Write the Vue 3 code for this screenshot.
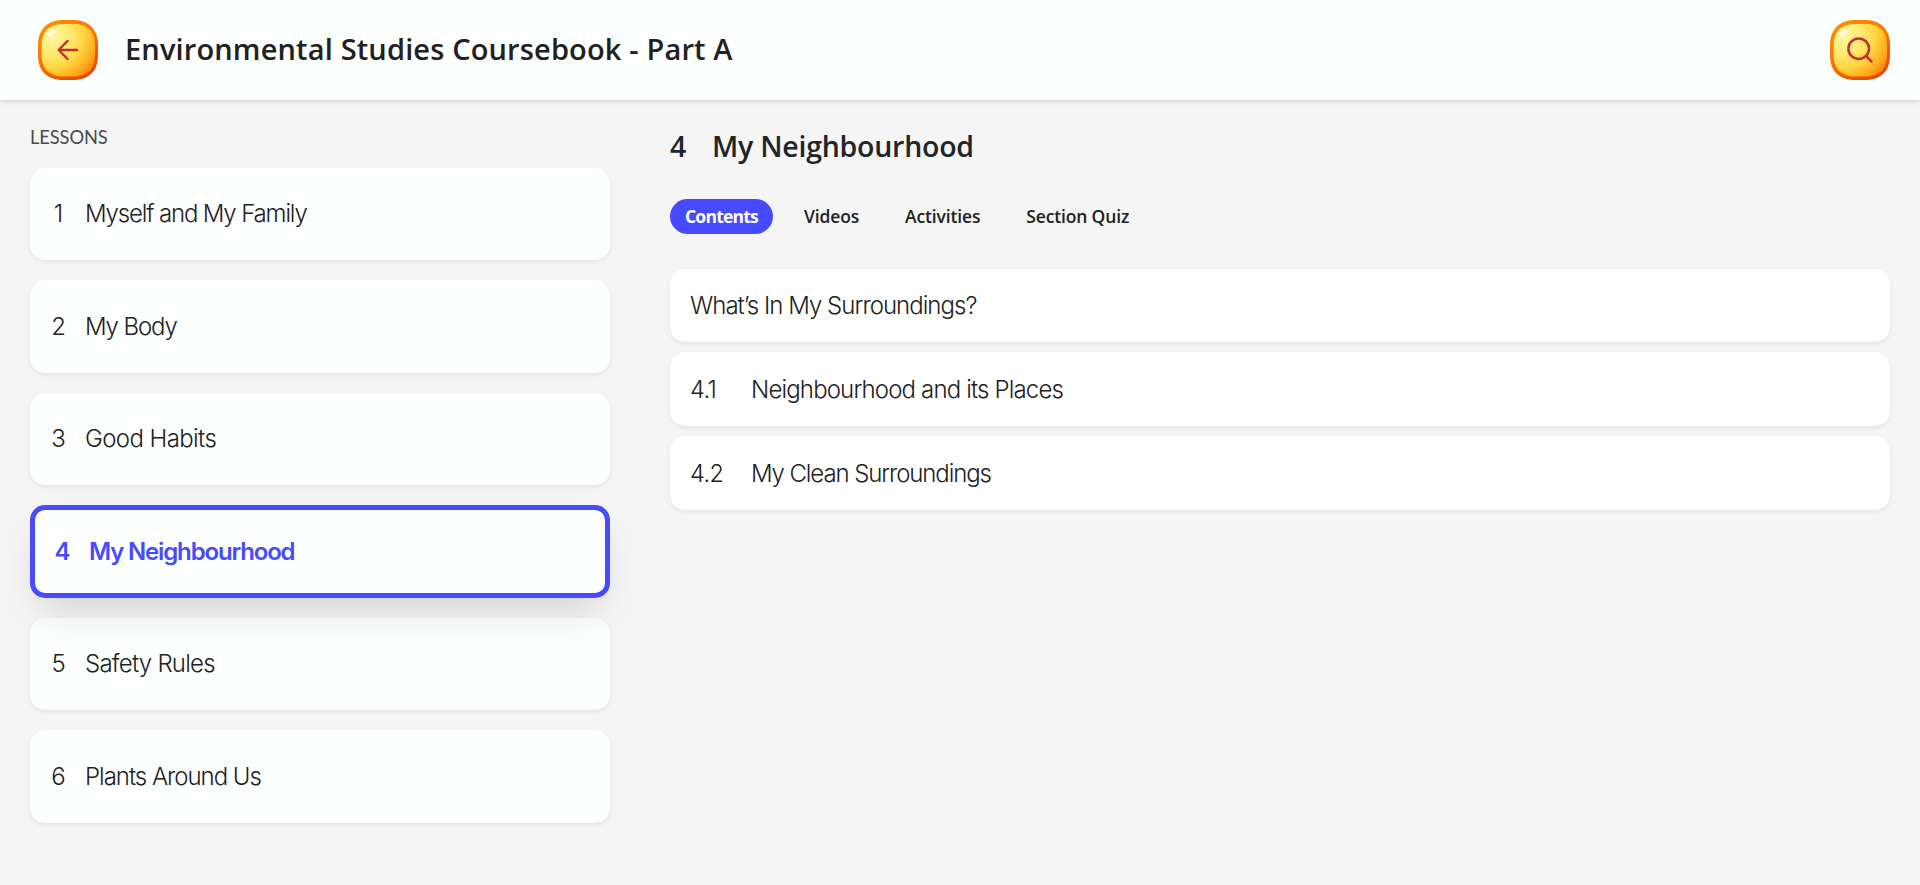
<script setup>
const lessons = [
  { no: '1', title: 'Myself and My Family', track: -1.15 },
  { no: '2', title: 'My Body', track: -1.1 },
  { no: '3', title: 'Good Habits', track: -0.6 },
  { no: '4', title: 'My Neighbourhood', track: -1.16, active: true },
  { no: '5', title: 'Safety Rules', track: -0.76 },
  { no: '6', title: 'Plants Around Us', track: -1.02 },
]
const tabs = [
  { label: 'Contents', active: true },
  { label: 'Videos' },
  { label: 'Activities' },
  { label: 'Section Quiz' },
]
const sections = [
  { title: 'What’s In My Surroundings?', track: -0.97 },
  { no: '4.1', title: 'Neighbourhood and its Places', track: -0.84 },
  { no: '4.2', title: 'My Clean Surroundings', track: -1.1 },
]
const icons = ['back', 'search']
</script>

<template>
  <div class="page">
    <svg class="defs" width="0" height="0" aria-hidden="true">
      <defs>
        <linearGradient id="rim" x1="0.2" y1="0" x2="0.8" y2="1">
          <stop offset="0" stop-color="#ff8c00" />
          <stop offset="0.5" stop-color="#f97200" />
          <stop offset="1" stop-color="#e54300" />
        </linearGradient>
        <radialGradient id="face" cx="0.2" cy="0.24" r="1.02">
          <stop offset="0" stop-color="#fff6a0" />
          <stop offset="0.32" stop-color="#ffea73" />
          <stop offset="0.58" stop-color="#ffd63f" />
          <stop offset="0.8" stop-color="#ffab1d" />
          <stop offset="1" stop-color="#ff7000" />
        </radialGradient>
      </defs>
    </svg>
    <header class="header">
      <button v-for="icon in icons" :key="icon" class="round" :class="icon" :aria-label="icon">
        <svg width="60" height="60" viewBox="0 0 60 60" fill="none">
          <path d="M25 0H35C51 0 60 10 60 25V35C60 51 51 60 35 60H25C9 60 0 51 0 35V25C0 10 9 0 25 0Z" fill="url(#rim)" />
          <path d="M26 4H35C50 4 57 11 57 26V34C57 49 50 56.500 35 56.500H25C11 56.500 3.500 49 3.500 34V26C3.500 11 11 4 26 4Z" fill="url(#face)" />
          <path d="M11.500 15Q12.500 12.500 15.500 11.500" stroke="#fffef0" stroke-width="3.600" stroke-linecap="round" />
          <g stroke="#c62f31" stroke-width="2.500" stroke-linecap="round" stroke-linejoin="round">
            <path v-if="icon === 'back'" d="M39 30H21M29.500 21L20.700 30L29.500 39" />
            <template v-else>
              <circle cx="28.700" cy="28.700" r="10.300" />
              <path d="M36.300 36.300L41.500 41.500" />
            </template>
          </g>
        </svg>
      </button>
      <h1 class="title">Environmental Studies Coursebook - Part A</h1>
    </header>
    <main class="body">
      <aside class="side">
        <div class="caption">LESSONS</div>
        <ul class="lessons">
          <li v-for="l in lessons" :key="l.no" class="lesson" :class="{ active: l.active }">
            <span class="num">{{ l.no }}</span>
            <span :style="{ letterSpacing: l.track + 'px' }">{{ l.title }}</span>
          </li>
        </ul>
      </aside>
      <section class="content">
        <h2 class="heading"><span class="hnum">4</span><span>My Neighbourhood</span></h2>
        <nav class="tabs">
          <a v-for="t in tabs" :key="t.label" class="tab" :class="{ active: t.active }">{{ t.label }}</a>
        </nav>
        <ul class="sections">
          <li v-for="s in sections" :key="s.title" class="section">
            <span v-if="s.no" class="snum">{{ s.no }}</span>
            <span :style="{ letterSpacing: s.track + 'px' }">{{ s.title }}</span>
          </li>
        </ul>
      </section>
    </main>
  </div>
</template>

<style>
body { background: #f5f5f5; }
</style>

<style scoped>
.page {
  height: 885px;
  overflow: hidden;
  background: #f5f5f5;
  color: #212121;
  font-family: Inter, "Liberation Sans", sans-serif;
  display: flex;
  flex-direction: column;
}
.page * { box-sizing: border-box; }
.defs { position: absolute; }
h1, h2, ul { margin: 0; padding: 0; list-style: none; }
.header {
  flex: none;
  height: 100px;
  padding: 0 30px 0 38px;
  display: flex;
  align-items: center;
  background: #fdfefe;
  box-shadow: 0 1px 5px rgba(0, 0, 0, 0.18);
}
.round {
  width: 60px;
  height: 60px;
  padding: 0;
  border: 0;
  background: none;
}
.round svg { display: block; }
.round.search { order: 3; }
.title {
  flex: 1;
  margin-left: 27px;
  padding-bottom: 2px;
  font: 600 29px/40px "Open Sans", "Noto Sans", sans-serif;
  letter-spacing: 0.15px;
}
.body { display: flex; padding: 0 30px; gap: 60px; }
.side { width: 580px; }
.caption {
  margin-top: 25px;
  height: 42.600px;
  font: 400 18.300px/25px Lato, sans-serif;
  letter-spacing: -0.1px;
  color: #4a4a4a;
}
.lessons { display: flex; flex-direction: column; gap: 20px; }
.lesson {
  height: 92.500px;
  padding-left: 20px;
  display: flex;
  align-items: center;
  border-radius: 15px;
  background: #fdfefe;
  box-shadow: 0 2px 4px rgba(0, 0, 0, 0.075);
  font-size: 24px;
  font-weight: 340;
  white-space: nowrap;
}
.num { width: 17px; margin-right: 18px; text-align: center; }
.lesson.active {
  position: relative;
  padding-left: 19px;
  border: 5px solid #474bff;
  color: #474bff;
  font-weight: 600;
  box-shadow: 0 20px 40px -10px rgba(0, 0, 0, 0.15);
}
.content { flex: 1; }
.heading {
  margin-top: 26px;
  display: flex;
  font: 600 28.500px/40px "Open Sans", "Noto Sans", sans-serif;
  letter-spacing: -0.24px;
  color: #212529;
}
.hnum { width: 42px; }
.tabs { display: flex; gap: 16px; margin-top: 33px; }
.tab {
  height: 35px;
  padding: 0 15px;
  border-radius: 18px;
  font: 600 17.500px/34px "Open Sans", "Noto Sans", sans-serif;
  letter-spacing: -0.15px;
}
.tab.active {
  width: 103px;
  background: #474bff;
  color: #fff;
  font-weight: 700;
  letter-spacing: -0.78px;
}
.sections { display: flex; flex-direction: column; gap: 10px; margin-top: 34.700px; }
.section {
  height: 73.750px;
  padding-left: 20px;
  display: flex;
  align-items: center;
  border-radius: 15px;
  background: #fff;
  box-shadow: 0 2px 4px rgba(0, 0, 0, 0.075);
  font-size: 24px;
  font-weight: 340;
  white-space: nowrap;
}
.snum { width: 61px; font-size: 23.500px; letter-spacing: -0.5px; }
</style>
